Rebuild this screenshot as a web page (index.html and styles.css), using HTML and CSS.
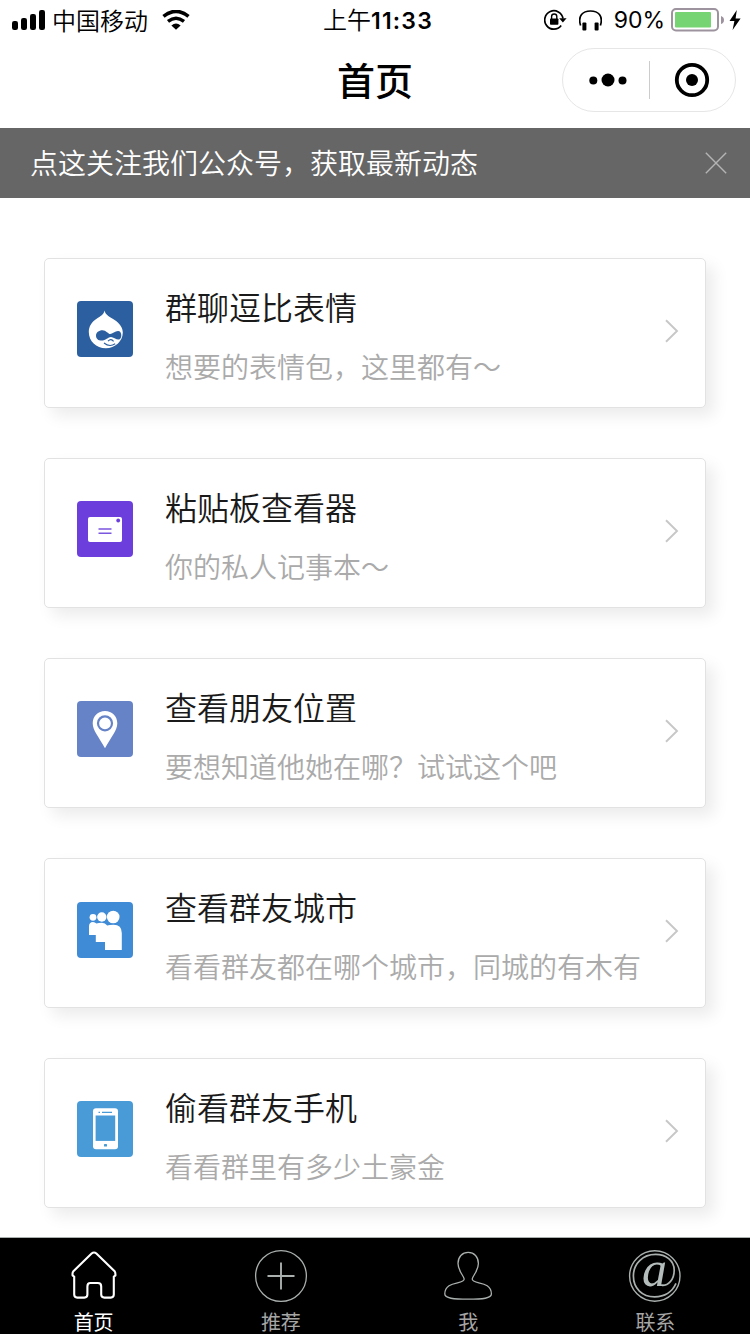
FILE: index.html
```html
<!DOCTYPE html>
<html lang="zh-CN">
<head>
    <meta charset="UTF-8">
    <meta name="viewport" content="width=device-width, initial-scale=1.0">
    <title>首页</title>
    <link rel="stylesheet" href="styles.css">
</head>
<body>
    <header class="header">
        <div class="status-bar">
            <div class="status-left">
                <svg class="signal" width="34" height="20" viewBox="0 0 34 20">
                    <rect x="0" y="11" width="6" height="9" rx="2.2"/>
                    <rect x="9" y="8" width="6" height="12" rx="2.2"/>
                    <rect x="18" y="4" width="6" height="16" rx="2.2"/>
                    <rect x="27" y="0" width="6" height="20" rx="2.2"/>
                </svg>
                <span class="carrier">中国移动</span>
                <svg class="wifi" width="28" height="20" viewBox="0 0 28 20">
                    <path d="M1.5 6.4Q14-3.6 26.5 6.4" fill="none" stroke="#000" stroke-width="3.6"/>
                    <path d="M6 11.4Q14 5 22 11.4" fill="none" stroke="#000" stroke-width="3.4"/>
                    <path d="M9.4 15.4Q14 11.6 18.6 15.4L14 19.8Z"/>
                </svg>
            </div>
            <div class="status-time">上午<b>11:33</b></div>
            <div class="status-right">
                <svg class="lock" width="23" height="22" viewBox="0 0 23 22">
                    <path d="M17.2 16.6A9.2 9.2 0 1 1 19 9.5" fill="none" stroke="#000" stroke-width="1.7"/>
                    <path d="M15.2 9.2H22.6L18.9 13.4Z"/>
                    <rect x="6" y="9.5" width="8.4" height="6.2" rx="0.8"/>
                    <path d="M7.6 10V7.6a2.6 2.6 0 0 1 5.2 0V10" fill="none" stroke="#000" stroke-width="1.4"/>
                </svg>
                <svg class="headphones" width="23" height="21" viewBox="0 0 23 21">
                    <path d="M1.6 15.5C-1.6 5.5 4 1 11.5 1S24.6 5.5 21.4 15.5" fill="none" stroke="#000" stroke-width="1.7"/>
                    <rect x="3.4" y="12.4" width="4" height="8" rx="1"/>
                    <rect x="15.6" y="12.4" width="4" height="8" rx="1"/>
                </svg>
                <span class="percent">90%</span>
                <svg class="battery" width="54" height="24" viewBox="0 0 54 24">
                    <rect x="1" y="1" width="46" height="21.5" rx="4" fill="#fff" stroke="#9d939f" stroke-width="2"/>
                    <rect x="4" y="4" width="36" height="15.5" rx="1" fill="#76d572"/>
                    <path d="M50 8q3 1 3 4t-3 4z" fill="#9d939f"/>
                </svg>
                <svg class="bolt" width="12" height="20" viewBox="0 0 12 20">
                    <path d="M7.8 0L0.5 11H5.4L3.6 20L11.6 8.4H6.6Z"/>
                </svg>
            </div>
        </div>
        <div class="nav-bar">
            <h1 class="nav-title">首页</h1>
            <div class="capsule">
                <div class="capsule-btn">
                    <svg width="38" height="14" viewBox="0 0 38 14">
                        <circle cx="4.3" cy="7.6" r="4"/>
                        <circle cx="19" cy="7" r="6.5"/>
                        <circle cx="33.5" cy="7.6" r="4"/>
                    </svg>
                </div>
                <div class="capsule-line"></div>
                <div class="capsule-btn">
                    <svg width="36" height="36" viewBox="0 0 36 36">
                        <circle cx="18" cy="18" r="15.2" fill="none" stroke="#000" stroke-width="3.8"/>
                        <circle cx="18" cy="18" r="6"/>
                    </svg>
                </div>
            </div>
        </div>
    </header>

    <div class="notice">
        <span>点这关注我们公众号，获取最新动态</span>
        <svg width="22" height="22" viewBox="0 0 22 22">
            <path d="M0.8 0.8L21.2 21.2M21.2 0.8L0.8 21.2" stroke="#b4b4b4" stroke-width="1.4"/>
        </svg>
    </div>

    <main class="list">
        <div class="card">
            <svg class="card-icon" viewBox="0 0 56 56">
                <rect width="56" height="56" rx="4" fill="#2c5f9f"/>
                <path d="M27.5 9.5C28.7 14.5 33 15.8 38 19.2C43 22.6 45.8 26.8 45.8 31.5C45.8 40.3 38 47.2 28.8 47.2C19.2 47.2 11.8 40.3 11.8 31C11.8 25.2 14.8 21 19.6 17.8C23.6 15 26.7 13.6 27.5 9.5Z" fill="#fff"/>
                <path d="M25.5 29.2C29 29.2 31.4 33 33.2 33C35.2 33 38.2 30 41 30C43.2 30 44.3 32 44.3 34.3C44.3 36.8 43.3 38.6 41.6 38.6C39 38.6 36.2 36 34 36C31.2 36 28.6 39.6 24.6 39.6C21.3 39.6 19 37.7 19 34.7C19 31.5 21.8 29.2 25.5 29.2Z" fill="#2c5f9f"/>
                <path d="M31 40.2Q34 37 36.6 40.4M27 42Q32.5 46.5 38.2 42.8" fill="none" stroke="#2c5f9f" stroke-width="1.1"/>
            </svg>
            <div class="card-text">
                <h2>群聊逗比表情</h2>
                <p>想要的表情包，这里都有～</p>
            </div>
            <svg class="arrow" viewBox="0 0 14 24"><path d="M1 1.2L12 12L1 22.8"/></svg>
        </div>
        <div class="card">
            <svg class="card-icon" viewBox="0 0 56 56">
                <rect width="56" height="56" rx="4" fill="#6c3fdc"/>
                <rect x="11" y="16" width="34" height="25" rx="2" fill="#fff"/>
                <circle cx="41.2" cy="19.5" r="1.9" fill="#6c3fdc"/>
                <path d="M21.5 28H34.5M21.5 32.2H34.5" stroke="#7b56de" stroke-width="1.4"/>
            </svg>
            <div class="card-text">
                <h2>粘贴板查看器</h2>
                <p>你的私人记事本～</p>
            </div>
            <svg class="arrow" viewBox="0 0 14 24"><path d="M1 1.2L12 12L1 22.8"/></svg>
        </div>
        <div class="card">
            <svg class="card-icon" viewBox="0 0 56 56">
                <rect width="56" height="56" rx="4" fill="#6583c6"/>
                <path d="M28 10C35 10 40.3 15.2 40.3 22.2C40.3 29.5 34 36 28 47.2C22 36 15.7 29.5 15.7 22.2C15.7 15.2 21 10 28 10Z" fill="#fff"/>
                <circle cx="28" cy="22.3" r="7" fill="none" stroke="#6583c6" stroke-width="2.2"/>
            </svg>
            <div class="card-text">
                <h2>查看朋友位置</h2>
                <p>要想知道他她在哪？试试这个吧</p>
            </div>
            <svg class="arrow" viewBox="0 0 14 24"><path d="M1 1.2L12 12L1 22.8"/></svg>
        </div>
        <div class="card card-city">
            <svg class="card-icon" viewBox="0 0 56 56">
                <rect width="56" height="56" rx="4" fill="#3f8bd6"/>
                <g fill="#fff">
                    <circle cx="16" cy="15.3" r="3.4"/>
                    <circle cx="24.8" cy="15" r="4.7"/>
                    <circle cx="36.2" cy="15" r="6.3"/>
                    <path d="M12 33V24.5Q12 20 16 20Q18 20 19.4 21.6Q21.5 20.8 25 20.8Q28.2 20.8 30.2 23.6Q32.5 22.8 36.5 22.8Q44.8 22.8 44.8 31V48H28V40H18.8V33Z"/>
                </g>
            </svg>
            <div class="card-text">
                <h2>查看群友城市</h2>
                <p>看看群友都在哪个城市，同城的有木有</p>
            </div>
            <svg class="arrow" viewBox="0 0 14 24"><path d="M1 1.2L12 12L1 22.8"/></svg>
        </div>
        <div class="card">
            <svg class="card-icon" viewBox="0 0 56 56">
                <rect width="56" height="56" rx="4" fill="#489bd6"/>
                <rect x="16" y="7.3" width="25" height="41" rx="3" fill="#fff"/>
                <rect x="18.6" y="14.5" width="19.6" height="25.4" fill="#489bd6"/>
                <path d="M25 11.4H35M21.5 11.4H23" stroke="#489bd6" stroke-width="1.2"/>
                <rect x="27" y="43" width="3" height="2.6" rx="0.6" fill="#489bd6"/>
            </svg>
            <div class="card-text">
                <h2>偷看群友手机</h2>
                <p>看看群里有多少土豪金</p>
            </div>
            <svg class="arrow" viewBox="0 0 14 24"><path d="M1 1.2L12 12L1 22.8"/></svg>
        </div>
    </main>

    <nav class="tab-bar">
        <div class="tab active">
            <svg viewBox="0 0 54 54">
                <path d="M24.6 4.6Q27 2.4 29.4 4.6L47.6 22.2Q48.6 23.4 48.4 26.4L46.8 27.8V45.6Q46.8 48.6 43.8 48.6H37.4Q34.2 48.6 34.2 45.6V37.4Q34.2 34 30.8 34H23.4Q20.4 34 20.4 37.4V45.6Q20.4 48.6 17.4 48.6H10.2Q7.2 48.6 7.2 45.6V27.8L5.6 26.4Q5.2 23.4 6.4 22.2Z" stroke-width="2.1"/>
            </svg>
            <span>首页</span>
        </div>
        <div class="tab">
            <svg viewBox="0 0 54 54">
                <circle cx="27" cy="27" r="25.4" stroke-width="1.3"/>
                <path d="M27 13.5V40.5M13.5 27H40.5" stroke-width="1.9"/>
            </svg>
            <span>推荐</span>
        </div>
        <div class="tab">
            <svg viewBox="0 0 54 54">
                <path d="M23.2 30C22.6 26.4 17 22 17 14.6C17 7.8 21.2 3.4 27.2 3.4S37.4 7.8 37.4 14.6C37.4 22 31.8 26.4 31.2 30C31.2 36 50.4 31 50.4 45C50.4 49.4 42 50.2 27.2 50.2S3.8 49.4 3.8 45C3.8 31 23.2 36 23.2 30Z" stroke-width="1.3"/>
            </svg>
            <span>我</span>
        </div>
        <div class="tab">
            <svg viewBox="0 0 54 54">
                <circle cx="26.8" cy="27" r="25.2" stroke-width="1.4"/>
                <path d="M34 36.4C40 36.8 46.2 31 46.2 21.2C46.2 11.4 37.8 5.4 27.6 5.4C14.8 5.4 5.4 14.8 5.4 27C5.4 39.4 14.2 47.8 26.6 47.8C36.6 47.8 44.4 42.6 48 34.4" stroke-width="1.7"/>
                <text x="14" y="37">a</text>
            </svg>
            <span>联系</span>
        </div>
    </nav>
</body>
</html>
```
FILE: styles.css
```css
* {
    box-sizing: border-box;
}
body {
    margin: 0;
    height: 1334px;
    display: flex;
    flex-direction: column;
    overflow: hidden;
    background: #fff;
    color: #000;
    font-family: "Noto Sans CJK SC", sans-serif;
}
svg {
    display: block;
    flex-shrink: 0;
}
h1, h2, p {
    margin: 0;
}
.header {
    height: 128px;
}
.status-bar {
    display: grid;
    grid-template-columns: 1fr auto 1fr;
    align-items: center;
    height: 40px;
    padding: 0 9px 0 12px;
    font-size: 24px;
    font-weight: 350;
    line-height: 38px;
}
.status-left, .status-right {
    display: flex;
    align-items: center;
}
.status-right {
    justify-content: flex-end;
}
.carrier {
    margin: 0 14px 0 6px;
}
.status-time {
    padding-left: 3px;
}
.status-time b {
    font-family: Inter, sans-serif;
    font-weight: 600;
    font-size: 23px;
    letter-spacing: 1.2px;
}
.headphones {
    margin-left: 12px;
}
.percent {
    margin: 0 6px 0 12px;
    font-family: Inter, sans-serif;
    font-size: 23px;
    font-weight: 400;
}
.bolt {
    margin-left: 4px;
}
.nav-bar {
    display: grid;
    grid-template-columns: 1fr auto 1fr;
    align-items: center;
    height: 80px;
    padding: 0 14px;
}
.nav-title {
    grid-column: 2;
    padding-bottom: 2px;
    font-size: 38px;
    font-weight: 500;
    line-height: 78px;
}
.capsule {
    display: flex;
    align-items: center;
    justify-self: end;
    width: 174px;
    height: 64px;
    border: 1px solid #e6e6e6;
    border-radius: 32px;
}
.capsule-btn {
    flex: 1;
    display: flex;
    justify-content: center;
}
.capsule-btn:first-child {
    padding-left: 3px;
}
.capsule-btn:last-child {
    padding-right: 1px;
}
.capsule-line {
    width: 1px;
    height: 38px;
    margin: 0 1px 0 -1px;
    background: #ccc;
}
.notice {
    display: flex;
    align-items: center;
    justify-content: space-between;
    height: 70px;
    padding: 0 23px 0 30px;
    background: #666;
    color: #fff;
    font-size: 28px;
    font-weight: 350;
    line-height: 70px;
}
.notice span {
    padding-bottom: 2px;
}
.list {
    flex: 1;
    display: flex;
    flex-direction: column;
    gap: 50px;
    padding: 60px 44px 0;
}
.card {
    display: flex;
    align-items: center;
    height: 150px;
    padding: 0 26px 0 32px;
    border: 1px solid #e2e2e2;
    border-radius: 5px;
    background: #fff;
    box-shadow: 8px 8px 16px rgba(0, 0, 0, 0.08);
}
.card-icon {
    width: 56px;
    height: 56px;
    margin: 0 32px 8px 0;
}
.card-city .card-icon {
    margin-bottom: 6px;
}
.card-text {
    flex: 1;
    padding-top: 5px;
    white-space: nowrap;
}
.card-text h2 {
    color: #1a1a1a;
    font-size: 32px;
    font-weight: 350;
    line-height: 60px;
}
.card-text p {
    color: #aaa;
    font-size: 28px;
    font-weight: 350;
    line-height: 60px;
}
.arrow {
    width: 14px;
    height: 24px;
    margin-bottom: 4px;
    fill: none;
    stroke: #c7c7c7;
    stroke-width: 1.9;
}
.tab-bar {
    display: flex;
    height: 97px;
    padding-right: 1px;
    border-top: 1px solid #a9b0ad;
    background: #000;
}
.tab {
    flex: 1;
    display: flex;
    flex-direction: column;
    align-items: center;
    padding-top: 11px;
    color: #a6a6a6;
    font-size: 20px;
    line-height: 38px;
}
.tab svg {
    width: 54px;
    height: 54px;
    fill: none;
    stroke: #a9b0ae;
    overflow: visible;
}
.tab span {
    height: 30px;
}
.tab text {
    fill: #b4bdbb;
    stroke: none;
    font-family: "Liberation Serif", serif;
    font-size: 50px;
    font-style: italic;
}
.tab.active {
    color: #fff;
}
.tab.active svg {
    stroke: #fff;
}
```
